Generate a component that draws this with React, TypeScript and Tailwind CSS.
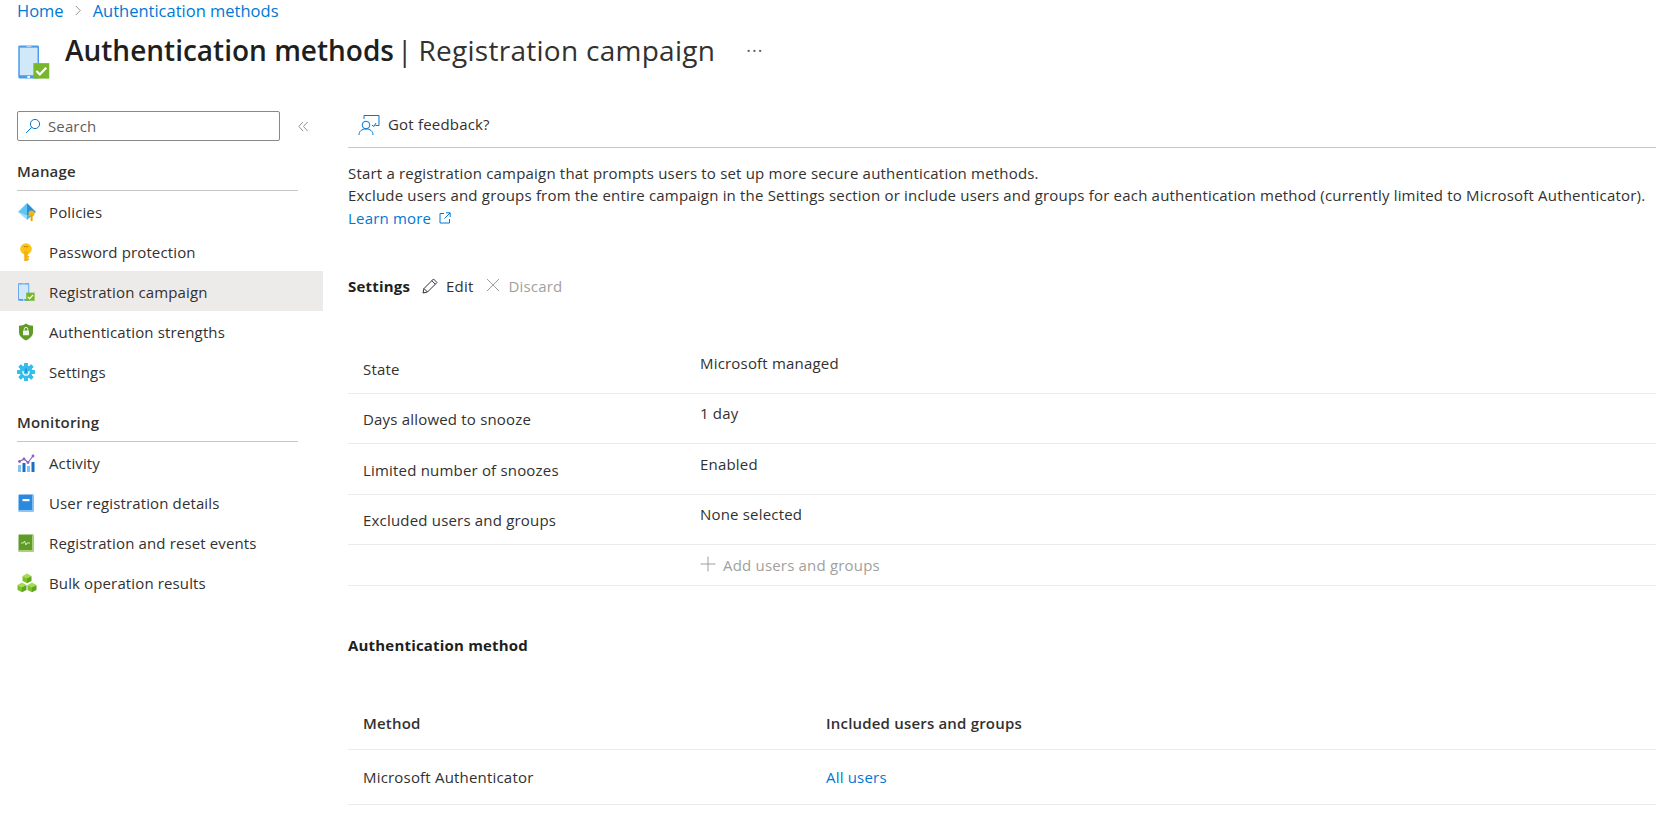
import React from "react";

const font = { fontFamily: '"Open Sans", "Noto Sans", sans-serif' };

function PhoneIcon({ big }: { big?: boolean }) {
  return (
    <svg viewBox="0 0 18 18" className={big ? "w-[34px] h-[34px]" : "w-[18px] h-[18px]"}>
      <rect x="1.2" y="0.3" width="11" height="17.4" rx="0.7" fill="#4a9be8" />
      <rect x="2" y="1.4" width="9.4" height="14.6" fill="#d0e8fa" />
      <rect x="5.5" y="0.6" width="2.6" height="0.4" fill="#d0e8fa" />
      <rect x="6" y="16.4" width="1.4" height="1" fill="#fff" />
      <rect x="9.2" y="9.6" width="8.4" height="8.2" fill="#76b82a" />
      <path d="M10.8 13.8l1.8 1.8 3.4-3.6" fill="none" stroke="#fff" strokeWidth="1.2" />
    </svg>
  );
}

function PoliciesIcon() {
  return (
    <svg viewBox="0 0 20 20" className="w-5 h-5">
      <path d="M10 1L1 10l9 4z" fill="#5ec6f2" />
      <path d="M10 1l9 9-9 4z" fill="#2a8de0" />
      <path d="M1 10l9 8 0-4z" fill="#9adcf7" />
      <path d="M19 10l-9 8 0-4z" fill="#50aeea" />
      <circle cx="14.5" cy="11.5" r="3" fill="#f5b50d" />
      <rect x="13.6" y="13" width="2" height="6" fill="#e8a30a" />
    </svg>
  );
}
function KeyIcon() {
  return (
    <svg viewBox="0 0 18 18" className="w-[18px] h-[18px]">
      <circle cx="9" cy="6" r="5.800" fill="#fcc419" />
      <rect x="7.2" y="8" width="3.600" height="10" fill="#f7ae0f" />
      <rect x="6.800" y="3" width="4.400" height="1.200" fill="#c98a08" />
      <path d="M10.500 13h1.600v1.400h-1.600zM10.500 15.500h1.600v1.400h-1.600z" fill="#f7ae0f" />
    </svg>
  );
}
function ShieldIcon() {
  return (
    <svg viewBox="0 0 18 18" className="w-[18px] h-[18px]">
      <path d="M9 0.5c2 1.5 4.500 2.200 7 2.300v6.400c0 3.800-3.200 6.400-7 8.300-3.800-1.900-7-4.500-7-8.300V2.800C4.500 2.700 7 2 9 0.500z" fill="#5e9c27" />
      <rect x="6" y="7.500" width="6" height="4.800" rx="0.400" fill="#f0f5e8" />
      <path d="M7.200 7.600V6.200a1.800 1.800 0 013.600 0v1.400" fill="none" stroke="#f0f5e8" strokeWidth="1" />
    </svg>
  );
}
function GearIcon() {
  const teeth = [0, 45, 90, 135, 180, 225, 270, 315];
  return (
    <svg viewBox="0 0 18 18" className="w-[18px] h-[18px]">
      {teeth.map((a) => (
        <rect key={a} x="7.200" y="0" width="3.600" height="18" rx="0.600" fill="#32bdea" transform={`rotate(${a} 9 9)`} />
      ))}
      <circle cx="9" cy="9" r="6.400" fill="#32bdea" />
      <path d="M6.200 8a3 3 0 105.600 0" fill="none" stroke="#fff" strokeWidth="1.400" />
      <rect x="8.300" y="5.600" width="1.400" height="4" fill="#1c86c9" />
    </svg>
  );
}
function ActivityIcon() {
  return (
    <svg viewBox="0 0 18 18" className="w-[18px] h-[18px]">
      <rect x="1" y="11" width="3" height="7" fill="#7fc4f2" />
      <rect x="5.500" y="9" width="3" height="9" fill="#1a70c4" />
      <rect x="10" y="12" width="3" height="6" fill="#7fc4f2" />
      <rect x="14.500" y="8" width="3" height="10" fill="#1a70c4" />
      <path d="M2.500 7.500L7 5l4 3.500L16 2" fill="none" stroke="#8661c5" strokeWidth="1.200" />
      <circle cx="2.500" cy="7.500" r="1.400" fill="#8661c5" />
      <circle cx="7" cy="5" r="1.400" fill="#8661c5" />
      <circle cx="11" cy="8.500" r="1.400" fill="#8661c5" />
      <circle cx="16" cy="2" r="1.400" fill="#8661c5" />
    </svg>
  );
}
function BookIcon() {
  return (
    <svg viewBox="0 0 18 18" className="w-[18px] h-[18px]">
      <rect x="1.500" y="0.500" width="15" height="17" rx="1" fill="#2b8ae0" />
      <rect x="15" y="0.500" width="1.500" height="17" fill="#7fbdf0" />
      <rect x="1.500" y="16" width="15" height="1.500" fill="#8ac4f2" />
      <rect x="5.500" y="5" width="7" height="2.200" fill="#fff" />
    </svg>
  );
}
function EventsIcon() {
  return (
    <svg viewBox="0 0 18 18" className="w-[18px] h-[18px]">
      <rect x="1.500" y="0.500" width="15" height="17" rx="0.600" fill="#5e9c27" />
      <rect x="15" y="0.500" width="1.500" height="17" fill="#a8cf7c" />
      <rect x="1.500" y="16" width="15" height="1.500" fill="#a8cf7c" />
      <path d="M4 9h2.500l1-2 1.500 4 1-2h3" fill="none" stroke="#dff0c8" strokeWidth="0.900" />
    </svg>
  );
}
function Cube({ x, y }: { x: number; y: number }) {
  return (
    <g transform={`translate(${x} ${y})`}>
      <path d="M4.500 0L9 2.400 4.500 4.800 0 2.400z" fill="#a5dc4e" />
      <path d="M0 2.400l4.500 2.400v5L0 7.400z" fill="#7cc02a" />
      <path d="M9 2.400L4.500 4.800v5L9 7.400z" fill="#5fa51f" />
    </g>
  );
}
function BulkIcon() {
  return (
    <svg viewBox="0 0 20 20" className="w-5 h-5">
      <Cube x={5.500} y={0.500} />
      <Cube x={0.500} y={9.500} />
      <Cube x={10.500} y={9.500} />
    </svg>
  );
}

const body = "text-[15px] tracking-[0.19px]";

function NavItem({ icon, label, active }: { icon: React.ReactNode; label: string; active?: boolean }) {
  return (
    <div className={`h-10 flex items-center pl-[17px] pt-[2px] ${active ? "bg-[#edebe9]" : ""}`}>
      <span className="w-[32px] flex items-center shrink-0">{icon}</span>
      <span className="text-[15px] tracking-[0.13px] text-[#323130]">{label}</span>
    </div>
  );
}

function SectionHead({ children }: { children: React.ReactNode }) {
  return (
    <div className="ml-[17px] mr-[25px] h-[30px] border-b border-[#c8c6c4] text-[15px] tracking-[0.19px] font-semibold text-[#323130] leading-[20px]">
      {children}
    </div>
  );
}

function Row({ label, value, h, up }: { label: string; value: string; h: string; up?: boolean }) {
  return (
    <div className={`flex border-b border-[#edebe9] text-[15px] tracking-[0.19px] text-[#323130] ${h}`}>
      <div className={`w-[352px] pl-[15px] leading-[20px] ${up ? "pt-[15px]" : "pt-[16px]"}`}>{label}</div>
      <div className={`leading-[20px] ${up ? "pt-[9px]" : "pt-[10px]"}`}>{value}</div>
    </div>
  );
}

export default function App() {
  return (
    <div style={font} className="w-[1656px] h-[831px] overflow-hidden bg-white text-[#323130]">
      <div className="h-[22px] pl-[17px] flex items-start gap-[10px] text-[16.5px] text-[#0078d4] leading-[22px]">
        <span>Home</span>
        <svg viewBox="0 0 10 12" className="w-[9px] h-[11px] mt-[5px]">
          <path d="M2 1l5 5-5 5" fill="none" stroke="#8a8886" strokeWidth="1" />
        </svg>
        <span>Authentication methods</span>
      </div>
      <div className="h-[78px] flex">
        <div className="pl-[16px] pt-[23px] w-[65px] shrink-0">
          <PhoneIcon big />
        </div>
        <div className="pt-[10px] flex items-start">
          <span className="text-[28px] leading-[36px] font-semibold text-[#201f1e]">Authentication methods</span>
          <span className="text-[28px] leading-[36px] text-[#323130] ml-[3px]">|</span>
          <span className="text-[28px] leading-[36px] tracking-[0.28px] text-[#323130] ml-[6px]">Registration campaign</span>
          <span className="ml-[31px] text-[18px] leading-[36px] tracking-[1px] text-[#605e5c]">···</span>
        </div>
      </div>
      <div className="flex">
        <aside className="w-[323px] shrink-0 pt-[11px]">
          <div className="flex items-center">
            <div className="ml-[17px] w-[263px] h-[30px] border border-[#8a8886] rounded-[2px] flex items-center pl-[7px]">
              <svg viewBox="0 0 16 16" className="w-[16px] h-[16px]">
                <circle cx="10" cy="6" r="4.600" fill="none" stroke="#0078d4" strokeWidth="1" />
                <path d="M6.700 9.300L1 15" fill="none" stroke="#0078d4" strokeWidth="1" />
              </svg>
              <span className="ml-[7px] text-[15px] tracking-[0.13px] text-[#605e5c]">Search</span>
            </div>
            <svg viewBox="0 0 12 12" className="ml-[18px] w-[11px] h-[11px]">
              <path d="M5.500 1L1 6l4.500 5M10.500 1L6 6l4.500 5" fill="none" stroke="#8a8886" strokeWidth="1" />
            </svg>
          </div>
          <div className="mt-[20px]">
            <SectionHead>Manage</SectionHead>
            <div>
              <NavItem icon={<PoliciesIcon />} label="Policies" />
              <NavItem icon={<KeyIcon />} label="Password protection" />
              <NavItem icon={<PhoneIcon />} label="Registration campaign" active />
              <NavItem icon={<ShieldIcon />} label="Authentication strengths" />
              <NavItem icon={<GearIcon />} label="Settings" />
            </div>
          </div>
          <div className="mt-[21px]">
            <SectionHead>Monitoring</SectionHead>
            <div>
              <NavItem icon={<ActivityIcon />} label="Activity" />
              <NavItem icon={<BookIcon />} label="User registration details" />
              <NavItem icon={<EventsIcon />} label="Registration and reset events" />
              <NavItem icon={<BulkIcon />} label="Bulk operation results" />
            </div>
          </div>
        </aside>
        <main className="flex-1 pl-[25px] min-w-0">
          <div className="h-[48px] border-b border-[#c8c6c4] flex items-center pl-[10px] pt-[2px]">
            <svg viewBox="0 0 22 22" className="w-[22px] h-[22px]">
              <circle cx="8" cy="11" r="3.800" fill="none" stroke="#0078d4" strokeWidth="1" />
              <path d="M1 21c0-4 3-6 7-6s7 2 7 6" fill="none" stroke="#0078d4" strokeWidth="1" />
              <path d="M6 5V1.500h15v10h-3.500" fill="none" stroke="#0078d4" strokeWidth="1" />
              <path d="M14 11l2 1.500 2-3.500" fill="none" stroke="#0078d4" strokeWidth="1" />
            </svg>
            <span className={`ml-[8px] ${body}`}>Got feedback?</span>
          </div>
          <div className={`pt-[14px] ${body} leading-[22px] whitespace-nowrap`}>
            <div>Start a registration campaign that prompts users to set up more secure authentication methods.</div>
            <div>Exclude users and groups from the entire campaign in the Settings section or include users and groups for each authentication method (currently limited to Microsoft Authenticator).</div>
            <div className="flex items-center text-[#0078d4] leading-[24px]">
              Learn more
              <svg viewBox="0 0 12 12" className="ml-[8px] w-[12px] h-[12px]">
                <path d="M5 1.500H1v9.500h9.500V7M7 .800h4.200V5M11 1L5.500 6.500" fill="none" stroke="#0078d4" strokeWidth="1" />
              </svg>
            </div>
          </div>
          <div className={`mt-[46px] h-[20px] flex items-center ${body}`}>
            <span className="font-bold text-[#201f1e]">Settings</span>
            <svg viewBox="0 0 16 16" className="ml-[12px] w-[16px] h-[16px]">
              <path d="M1 15l1-4.500L11.500 1l3.500 3.500L5.500 14z M9.800 2.700l3.500 3.500 M2 10.500l3.500 3.500" fill="none" stroke="#323130" strokeWidth="1" />
            </svg>
            <span className="ml-[8px] text-[#323130]">Edit</span>
            <svg viewBox="0 0 14 14" className="ml-[13px] w-[14px] h-[14px] -mt-[3px]">
              <path d="M1 1l12 12M13 1L1 13" fill="none" stroke="#a19f9d" strokeWidth="1" />
            </svg>
            <span className="ml-[8px] text-[#a19f9d]">Discard</span>
          </div>
          <div className="mt-[47px]">
            <Row label="State" value="Microsoft managed" h="h-[51px]" />
            <Row label="Days allowed to snooze" value="1 day" h="h-[50px]" up />
            <Row label="Limited number of snoozes" value="Enabled" h="h-[51px]" />
            <Row label="Excluded users and groups" value="None selected" h="h-[50px]" up />
            <div className={`h-[41px] border-b border-[#edebe9] flex items-center pl-[352px] ${body} text-[#a19f9d]`}>
              <svg viewBox="0 0 16 16" className="w-[16px] h-[16px] -mt-[3px]">
                <path d="M8 .500v15M.500 8h15" fill="none" stroke="#a19f9d" strokeWidth="1" />
              </svg>
              <span className="ml-[7px]">Add users and groups</span>
            </div>
          </div>
          <div className={`mt-[49px] ${body} font-bold leading-[20px] text-[#201f1e]`}>Authentication method</div>
          <div className={`mt-[40px] h-[55px] pt-[2px] flex items-center border-b border-[#edebe9] ${body} font-semibold`}>
            <div className="w-[478px] pl-[15px]">Method</div>
            <div>Included users and groups</div>
          </div>
          <div className={`h-[55px] flex items-center border-b border-[#edebe9] ${body}`}>
            <div className="w-[478px] pl-[15px]">Microsoft Authenticator</div>
            <div className="text-[#0078d4]">All users</div>
          </div>
        </main>
      </div>
    </div>
  );
}
